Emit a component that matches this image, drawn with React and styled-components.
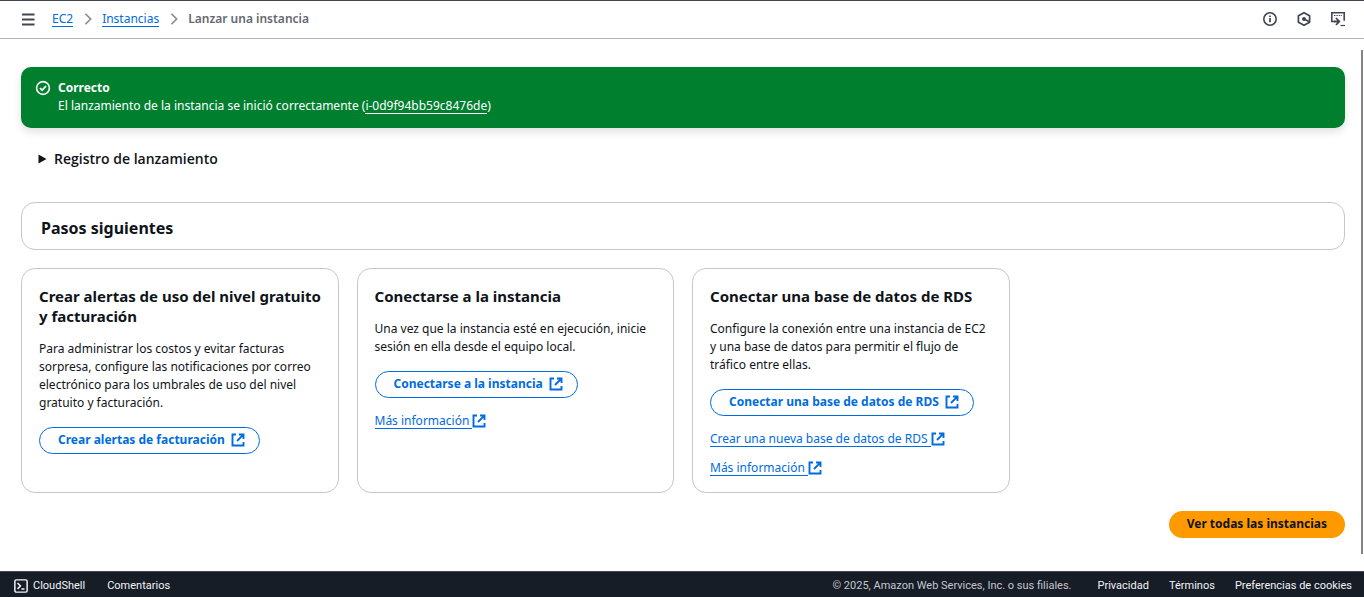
import React from 'react';
import styled, { createGlobalStyle, css } from 'styled-components';

const GlobalStyle = createGlobalStyle`
  *, *::before, *::after { box-sizing: border-box; }
  body {
    margin: 0;
    background: #fff;
    color: #0f141a;
    font-family: 'Noto Sans', 'Open Sans', sans-serif;
    font-size: 12px;
    line-height: 18px;
  }
  h2, h3, p, ol, ul { margin: 0; padding: 0; }
  button { font: inherit; cursor: pointer; }
`;

const Page = styled.div`
  display: flex;
  flex-direction: column;
  min-height: 100vh;
`;

const TopBar = styled.header`
  display: flex;
  align-items: center;
  justify-content: space-between;
  height: 39px;
  padding: 0 18px 2px 20px;
  border-top: 1px solid #424650;
  border-bottom: 1px solid #b4b4bb;
`;

const TopBarGroup = styled.div`
  display: flex;
  align-items: center;
  gap: ${(p) => p.$gap}px;
`;

const IconButton = styled.button`
  display: flex;
  padding: 0;
  border: 0;
  background: none;
  color: #424650;
`;

const Crumbs = styled.ol`
  display: flex;
  align-items: center;
  gap: 7px;
  list-style: none;
`;

const Crumb = styled.li`
  display: flex;
  align-items: center;
  gap: 8px;
  color: #656871;
  font-weight: ${(p) => (p.$current ? 600 : 400)};
`;

const Link = styled.a`
  display: inline-flex;
  align-items: flex-start;
  padding-top: 2px;
  color: ${(p) => (p.$inverse ? '#fff' : '#006ce0')};
  text-decoration: none;
`;

const LinkText = styled.span`
  padding-right: ${(p) => (p.$external ? 3 : 0)}px;
  line-height: 14px;
  border-bottom: 1px solid currentColor;
`;

const Body = styled.div`
  display: flex;
  flex: 1;
  padding-right: 1px;
`;

const Content = styled.main`
  flex: 1;
  min-width: 0;
  padding: 28px 16px 33px 21px;
`;

const ScrollTrack = styled.div`
  display: flex;
  width: 2px;
  padding: 11px 0 17px;
`;

const ScrollThumb = styled.div`
  flex: 1;
  background: #858585;
`;

const Banner = styled.section`
  display: flex;
  gap: 7px;
  padding: 12px 14px 13px;
  border-radius: 10px;
  background: #00802f;
  color: #fff;
  box-shadow: 0 4px 8px rgba(0, 7, 22, 0.12);
`;

const BannerIcon = styled.span`
  display: flex;
  padding-top: 1px;
`;

const BannerTitle = styled.p`
  font-weight: 700;
`;

const Expander = styled.details`
  margin: 22px 0 34px 17px;
`;

const ExpanderSummary = styled.summary`
  display: flex;
  align-items: center;
  gap: 7px;
  font-family: 'Open Sans', 'Noto Sans', sans-serif;
  font-size: 14px;
  font-weight: 600;
  line-height: 18px;
  cursor: pointer;
  list-style: none;
`;

const SectionHeader = styled.section`
  padding: 14px 19px 10px;
  border: 1px solid #c6c6cd;
  border-radius: 14px;
`;

const SectionTitle = styled.h2`
  font-size: 16px;
  line-height: 22px;
  font-weight: 700;
`;

const CardGrid = styled.div`
  display: grid;
  grid-template-columns: repeat(4, 1fr);
  gap: 18px;
  margin: 18px 0;
`;

const Card = styled.article`
  display: flex;
  flex-direction: column;
  align-items: flex-start;
  padding: 17px 12px 16px 17px;
  border: 1px solid #c6c6cd;
  border-radius: 14px;
`;

const CardTitle = styled.h3`
  margin-bottom: 14px;
  font-size: 15px;
  line-height: 20px;
  font-weight: 700;
`;

const CardText = styled.p`
  margin-bottom: 15px;
  padding-right: 6px;
`;

const CardLinks = styled.div`
  display: flex;
  flex-direction: column;
  align-items: flex-start;
  gap: 12px;
  margin-top: 14px;
`;

const Button = styled.button`
  display: inline-flex;
  align-items: center;
  gap: 6px;
  height: 27px;
  border-radius: 14px;
  white-space: nowrap;
  && { font-weight: 700; }
  ${(p) =>
    p.$primary
      ? css`
          padding: 0 18px 1px;
          border: 0;
          background: #ff9900;
          color: #0f141a;
        `
      : css`
          padding: 0 14px 1px 18px;
          border: 1px solid #006ce0;
          background: #fff;
          color: #006ce0;
        `}
`;

const Actions = styled.div`
  display: flex;
  justify-content: flex-end;
`;

const Footer = styled.footer`
  display: flex;
  align-items: center;
  justify-content: space-between;
  height: 26px;
  padding: 2px 12px 0 14px;
  border-top: 1px solid #424650;
  background: #161d26;
  color: #dedee3;
  font-family: Roboto, sans-serif;
  font-size: 11px;
`;

const FooterGroup = styled.div`
  display: flex;
  align-items: center;
  gap: ${(p) => p.$gap}px;
`;

const FooterLink = styled.a`
  display: inline-flex;
  align-items: center;
  gap: 5px;
  color: #f3f3f7;
  text-decoration: none;
`;

const Copyright = styled.span`
  padding-right: 6px;
  color: #c6c6cd;
`;

const Icon = ({ size = 16, box = 16, width = 2, children }) => (
  <svg
    width={size}
    height={size}
    viewBox={`0 0 ${box} ${box}`}
    fill="none"
    stroke="currentColor"
    strokeWidth={width}
    aria-hidden="true"
  >
    {children}
  </svg>
);

const MenuIcon = () => (
  <Icon width={1.8}>
    <path d="M2 3.5h12.5M2 8.5h12.5M2 13.5h12.5" />
  </Icon>
);

const ChevronIcon = () => (
  <Icon size={14}>
    <path d="m5 2 6 6-6 6" stroke="#8c8c94" />
  </Icon>
);

const InfoIcon = () => (
  <Icon>
    <circle cx="8" cy="8" r="6.2" strokeWidth="1.6" />
    <path d="M8 7v4.2M8 4.4v1.7" strokeWidth="1.7" />
  </Icon>
);

const HexIcon = () => (
  <Icon>
    <path d="M8 1.7 13.6 4.8v6.4L8 14.3 2.4 11.2V4.8z" strokeWidth="1.7" strokeLinejoin="round" />
    <circle cx="8" cy="8" r="2" fill="currentColor" stroke="none" />
    <path d="m8 8 5 2.4" strokeWidth="1.7" />
  </Icon>
);

const TerminalArrowIcon = () => (
  <Icon>
    <path d="M5 10.5H1.8V1.8h12.4v8" strokeWidth="1.6" />
    <path d="M4 4.5h8" strokeWidth="1.2" strokeDasharray="1.4 1" />
    <path d="M4 10.5h5M6 7l3.3 3.5L6 14" strokeWidth="1.8" />
    <path d="M10.5 14.5H15" strokeWidth="1.2" />
  </Icon>
);

const SuccessIcon = () => (
  <Icon>
    <circle cx="8" cy="8" r="6.4" strokeWidth="1.6" />
    <path d="m4.9 8 2.2 2.2 4-4.2" strokeWidth="1.7" />
  </Icon>
);

const ExternalIcon = () => (
  <Icon size={14} box={14} width={1.9}>
    <path d="M5 1.5H1.5v11h11V9" />
    <path d="M8 1.5h4.5V6M12.3 1.7 6 8" />
  </Icon>
);

const CaretIcon = () => (
  <svg width="9" height="10" viewBox="0 0 9 10" fill="currentColor" aria-hidden="true">
    <path d="M.5 .5 8.5 5 .5 9.5z" />
  </svg>
);

const ShellIcon = () => (
  <Icon size={14}>
    <rect x="1" y="1" width="14" height="14" rx="1.6" strokeWidth="1.7" />
    <path d="m4 4.5 3.4 3.4L4 11.3M8.5 11.5H12" strokeWidth="1.7" />
  </Icon>
);

const ExternalLink = ({ children }) => (
  <Link href="#">
    <LinkText $external>{children}</LinkText>
    <ExternalIcon />
  </Link>
);

const cards = [
  {
    title: 'Crear alertas de uso del nivel gratuito y facturación',
    text: 'Para administrar los costos y evitar facturas sorpresa, configure las notificaciones por correo electrónico para los umbrales de uso del nivel gratuito y facturación.',
    action: 'Crear alertas de facturación',
    links: [],
  },
  {
    title: 'Conectarse a la instancia',
    text: 'Una vez que la instancia esté en ejecución, inicie sesión en ella desde el equipo local.',
    action: 'Conectarse a la instancia',
    links: ['Más información'],
  },
  {
    title: 'Conectar una base de datos de RDS',
    text: 'Configure la conexión entre una instancia de EC2 y una base de datos para permitir el flujo de tráfico entre ellas.',
    action: 'Conectar una base de datos de RDS',
    links: ['Crear una nueva base de datos de RDS', 'Más información'],
  },
];

export default function App() {
  return (
    <Page>
      <GlobalStyle />
      <TopBar>
        <TopBarGroup $gap={16}>
          <IconButton aria-label="Menú">
            <MenuIcon />
          </IconButton>
          <nav aria-label="Ruta">
            <Crumbs>
              <Crumb>
                <Link href="#"><LinkText>EC2</LinkText></Link>
                <ChevronIcon />
              </Crumb>
              <Crumb>
                <Link href="#"><LinkText>Instancias</LinkText></Link>
                <ChevronIcon />
              </Crumb>
              <Crumb $current aria-current="page">Lanzar una instancia</Crumb>
            </Crumbs>
          </nav>
        </TopBarGroup>
        <TopBarGroup $gap={18}>
          <IconButton aria-label="Información"><InfoIcon /></IconButton>
          <IconButton aria-label="Amazon Q"><HexIcon /></IconButton>
          <IconButton aria-label="CloudShell"><TerminalArrowIcon /></IconButton>
        </TopBarGroup>
      </TopBar>

      <Body>
        <Content>
          <Banner role="status">
            <BannerIcon><SuccessIcon /></BannerIcon>
            <div>
              <BannerTitle>Correcto</BannerTitle>
              <p>
                El lanzamiento de la instancia se inició correctamente (
                <Link href="#" $inverse><LinkText>i-0d9f94bb59c8476de</LinkText></Link>)
              </p>
            </div>
          </Banner>

          <Expander>
            <ExpanderSummary>
              <CaretIcon />
              Registro de lanzamiento
            </ExpanderSummary>
          </Expander>

          <SectionHeader>
            <SectionTitle>Pasos siguientes</SectionTitle>
          </SectionHeader>

          <CardGrid>
            {cards.map((card) => (
              <Card key={card.title}>
                <CardTitle>{card.title}</CardTitle>
                <CardText>{card.text}</CardText>
                <Button>
                  {card.action}
                  <ExternalIcon />
                </Button>
                {card.links.length > 0 && (
                  <CardLinks>
                    {card.links.map((label) => (
                      <ExternalLink key={label}>{label}</ExternalLink>
                    ))}
                  </CardLinks>
                )}
              </Card>
            ))}
          </CardGrid>

          <Actions>
            <Button $primary>Ver todas las instancias</Button>
          </Actions>
        </Content>
        <ScrollTrack>
          <ScrollThumb />
        </ScrollTrack>
      </Body>

      <Footer>
        <FooterGroup $gap={22}>
          <FooterLink href="#">
            <ShellIcon />
            CloudShell
          </FooterLink>
          <FooterLink href="#">Comentarios</FooterLink>
        </FooterGroup>
        <FooterGroup $gap={20}>
          <Copyright>© 2025, Amazon Web Services, Inc. o sus filiales.</Copyright>
          <FooterLink href="#">Privacidad</FooterLink>
          <FooterLink href="#">Términos</FooterLink>
          <FooterLink href="#">Preferencias de cookies</FooterLink>
        </FooterGroup>
      </Footer>
    </Page>
  );
}
